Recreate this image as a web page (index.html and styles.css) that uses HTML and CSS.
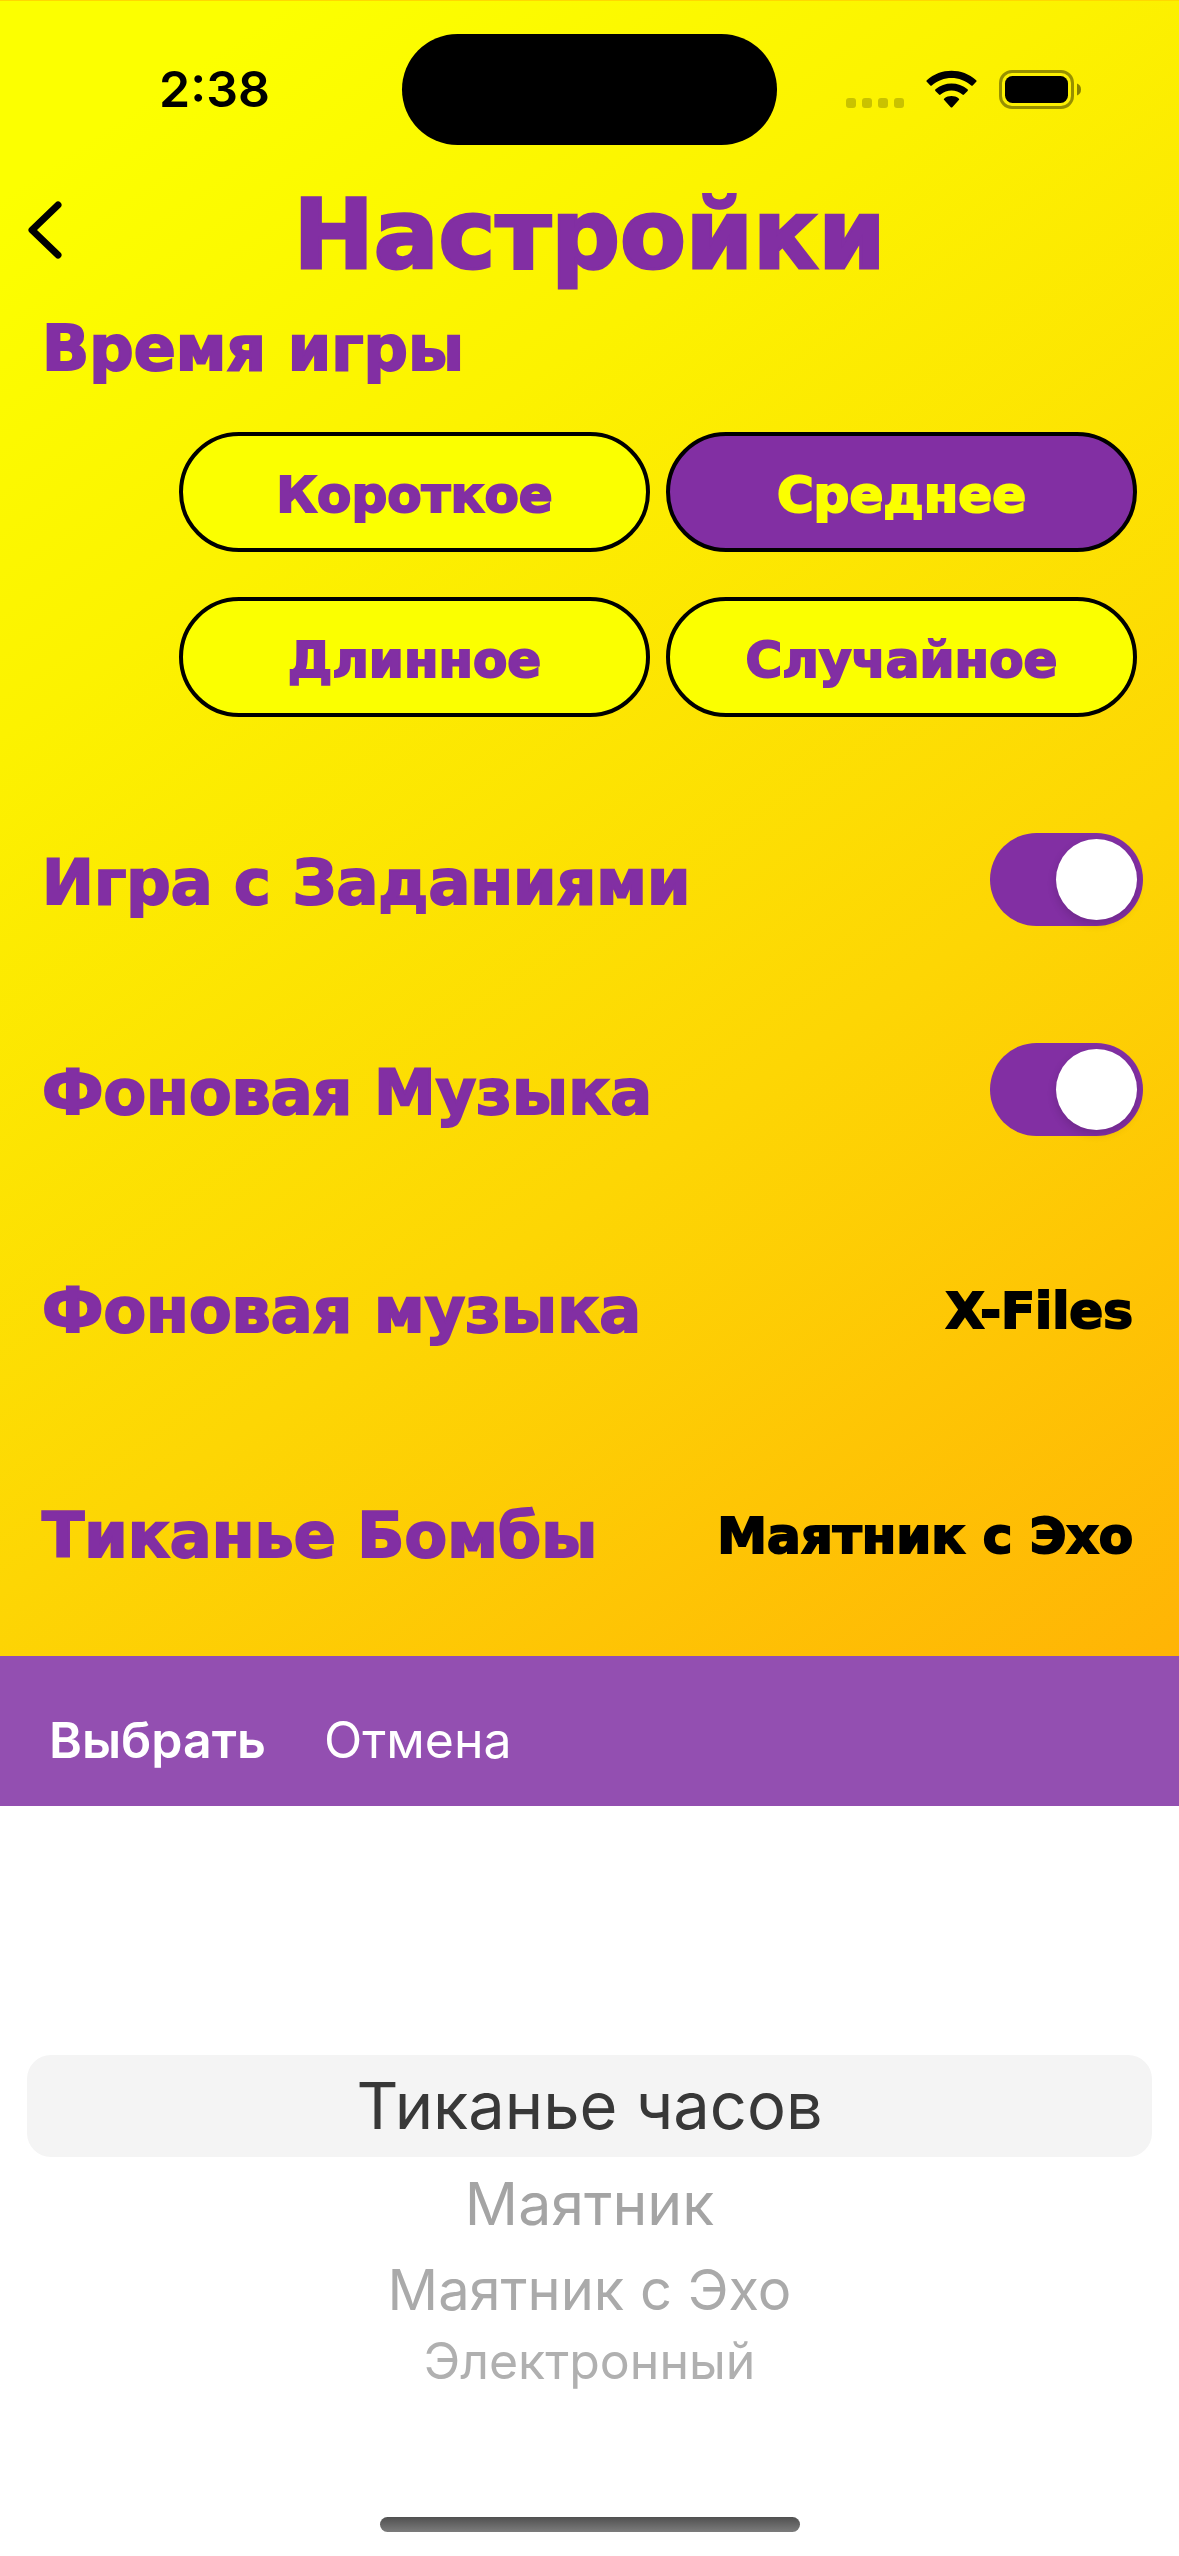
FILE: index.html
```html
<!DOCTYPE html>
<html lang="ru">
<head>
<meta charset="utf-8">
<meta name="viewport" content="width=device-width, initial-scale=1">
<title>Настройки</title>
<link rel="stylesheet" href="styles.css">
</head>
<body>
<main class="settings">
  <div class="status">
    <span class="status-time">2:38</span>
    <span class="island"></span>
    <span class="status-icons">
      <svg class="dots" viewBox="0 0 58 39" aria-hidden="true"><g fill="#000" fill-opacity=".2"><rect y="28" width="10" height="10" rx="3"/><rect x="16" y="28" width="10" height="10" rx="3"/><rect x="32" y="28" width="10" height="10" rx="3"/><rect x="48" y="28" width="10" height="10" rx="3"/></g></svg>
      <svg class="wifi" viewBox="0 0 51 39" aria-hidden="true"><path d="M.8 11.8Q0 11 .8 10.2C15-2.400 36-2.400 50.200 10.200Q51 11 50.200 11.800L46.700 15.500Q46 16.200 45.200 15.500C34 5.500 17 5.500 5.800 15.500Q5 16.200 4.300 15.500ZM9.400 20.900Q8.700 20 9.500 19.300C18.500 11.600 32.500 11.600 41.500 19.300Q42.300 20 41.600 20.900L38 24.600Q37.200 25.200 36.400 24.600C30 19.200 21 19.200 14.600 24.600Q13.800 25.200 13 24.600ZM18.200 30Q17.400 29.200 18.300 28.400C22.300 25.200 28.700 25.200 32.700 28.400Q33.600 29.200 32.800 30L26.300 37.200Q25.500 38 24.700 37.200Z"/></svg>
      <svg class="battery" viewBox="0 0 82 39" aria-hidden="true"><rect x="1.500" y="1.500" width="72" height="36" rx="11.500" fill="none" stroke="#000" stroke-opacity=".4" stroke-width="3"/><rect x="6" y="6" width="63" height="27" rx="7.500"/><path d="M78 13.500Q82 15 82 19.500Q82 24 78 25.500Z" fill-opacity=".45"/></svg>
    </span>
  </div>

  <header class="topbar">
    <button class="back" type="button" aria-label="Назад">
      <svg viewBox="0 0 34 58" aria-hidden="true"><path d="M30 4 4 29 30 54" fill="none" stroke="#000" stroke-width="7" stroke-linecap="round" stroke-linejoin="round"/></svg>
    </button>
    <h1 class="title">Настройки</h1>
  </header>

  <section class="duration">
    <h2 class="label">Время игры</h2>
    <div class="choices">
      <button class="choice" type="button">Короткое</button>
      <button class="choice choice-on" type="button" aria-pressed="true">Среднее</button>
      <button class="choice" type="button">Длинное</button>
      <button class="choice" type="button">Случайное</button>
    </div>
  </section>

  <div class="row">
    <label class="label" for="tasks">Игра с Заданиями</label>
    <input class="switch" id="tasks" type="checkbox" role="switch" checked>
  </div>
  <div class="row">
    <label class="label" for="music">Фоновая Музыка</label>
    <input class="switch" id="music" type="checkbox" role="switch" checked>
  </div>
  <div class="row row-pick">
    <span class="label" id="track">Фоновая музыка</span>
    <button class="value" type="button" aria-describedby="track">X-Files</button>
  </div>
  <div class="row row-pick">
    <span class="label" id="tick">Тиканье Бомбы</span>
    <button class="value" type="button" aria-describedby="tick">Маятник с Эхо</button>
  </div>
</main>

<section class="sheet">
  <div class="toolbar">
    <button class="action action-main" type="button">Выбрать</button>
    <button class="action" type="button">Отмена</button>
  </div>
  <div class="wheel" role="radiogroup" aria-label="Тиканье Бомбы">
    <label class="option option-selected"><input class="radio" type="radio" name="sound" checked>Тиканье часов</label>
    <label class="option option-near"><input class="radio" type="radio" name="sound">Маятник</label>
    <label class="option option-mid"><input class="radio" type="radio" name="sound">Маятник с Эхо</label>
    <label class="option option-far"><input class="radio" type="radio" name="sound">Электронный</label>
  </div>
  <div class="home"></div>
</section>
</body>
</html>
```
FILE: styles.css
```css
:root {
  --purple: #822fa3;
  --yellow: #fbff00;
  --display: "DejaVu Sans", Inter, sans-serif;
  --system: Inter, "Noto Sans", sans-serif;
}

* { box-sizing: border-box; }

body {
  display: flex;
  flex-direction: column;
  min-height: 100vh;
  margin: 0;
  background: #fff;
  font-family: var(--system);
}

button {
  margin: 0;
  padding: 0;
  border: 0;
  background: none;
  font: inherit;
  color: inherit;
}

h1, h2 { margin: 0; }

svg { display: block; }

.settings {
  padding-bottom: 12px;
  background: linear-gradient(146deg, #fcff00 8%, #fcf200 30%, #fdd604 65%, #ffb405 100%);
  border-top: 1px solid #ffd800;
  font-family: var(--display);
  font-weight: 700;
}

.status {
  display: grid;
  grid-template-columns: 1fr 375px 1fr;
  align-items: center;
  height: 176px;
}

.status-time {
  padding-left: 27px;
  text-align: center;
  font-family: var(--system);
  font-size: 50px;
  font-weight: 600;
}

.island {
  height: 111px;
  border-radius: 56px;
  background: #000;
}

.status-icons {
  display: flex;
  justify-content: flex-end;
  gap: 22px;
  padding-right: 98px;
}

.dots { width: 58px; height: 39px; }
.wifi { width: 51px; height: 39px; }
.battery { width: 82px; height: 39px; }

.topbar {
  display: grid;
  grid-template-columns: 90px 1fr 90px;
  align-items: center;
  height: 104px;
}

.back { padding: 0 0 4px 28px; }
.back svg { width: 34px; height: 58px; }

.title {
  padding-top: 6px;
  text-align: center;
  font-size: 96px;
  line-height: 104px;
  font-weight: 700;
  color: var(--purple);
  -webkit-text-stroke: 3px;
}

.label {
  padding-top: 8px;
  font-size: 62px;
  line-height: 72px;
  font-weight: 700;
  color: var(--purple);
  -webkit-text-stroke: 2px;
}

.duration {
  padding: 24px 42px 57px;
}

.choices {
  display: grid;
  grid-template-columns: 1fr 1fr;
  gap: 45px 16px;
  padding: 47px 0 0 137px;
}

.choice {
  height: 120px;
  padding-top: 6px;
  border: 4px solid #000;
  border-radius: 60px;
  background: var(--yellow);
  font-size: 50px;
  color: var(--purple);
  -webkit-text-stroke: 2px;
}

.choice-on {
  background: var(--purple);
  color: var(--yellow);
}

.row {
  display: flex;
  align-items: center;
  justify-content: space-between;
  height: 210px;
  padding: 0 36px 0 42px;
}

.row-pick {
  height: 225px;
  padding-right: 46px;
}

.value {
  padding-top: 8px;
  font-size: 50px;
  color: #000;
  -webkit-text-stroke: 2px;
}

.switch {
  display: flex;
  justify-content: flex-end;
  appearance: none;
  width: 153px;
  height: 93px;
  margin: 0;
  padding: 6px;
  border-radius: 47px;
  background: var(--purple);
}

.switch::before {
  content: "";
  width: 81px;
  height: 81px;
  border-radius: 50%;
  background: #fff;
  box-shadow: 0 4px 10px rgba(0, 0, 0, .15);
}

.sheet {
  display: flex;
  flex: 1;
  flex-direction: column;
}

.toolbar {
  display: flex;
  align-items: center;
  gap: 58px;
  height: 150px;
  padding: 18px 49px 0;
  background: #934fb1;
  color: #fff;
}

.action {
  font-size: 50px;
  font-weight: 400;
}

.action-main { font-weight: 600; }

.wheel {
  display: flex;
  flex-direction: column;
  padding: 249px 27px 0;
  text-align: center;
}

.option { color: #aaa; }

.radio {
  position: absolute;
  appearance: none;
  margin: 0;
}

.option-selected {
  border-radius: 24px;
  background: #f4f4f4;
  font-size: 65px;
  line-height: 102px;
  color: #383838;
}

.option-near { font-size: 59px; line-height: 94px; color: #a4a4a4; }
.option-mid { font-size: 56px; line-height: 78px; }
.option-far { font-size: 50px; line-height: 64px; color: #b0b0b0; }

.home {
  width: 420px;
  height: 15px;
  margin: auto auto 24px;
  border-radius: 8px;
  background: linear-gradient(#505050, #7c7c7c);
}
```
